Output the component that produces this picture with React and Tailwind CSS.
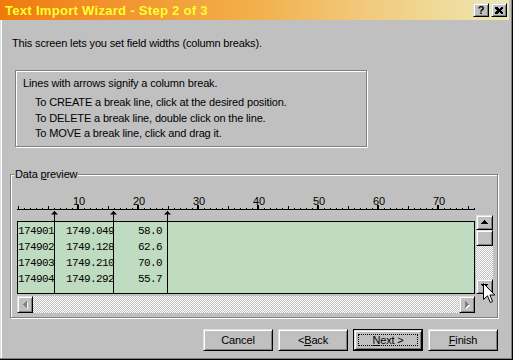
import React from 'react';

// classic 3D borders
const raised =
  'border border-t-[#dfdfdf] border-l-[#dfdfdf] border-r-black border-b-black shadow-[inset_1px_1px_#fff,inset_-1px_-1px_#808080]';
const etched = 'border border-[#808080] shadow-[inset_1px_1px_#fff,1px_1px_#fff]';
const checker =
  'bg-[image:repeating-conic-gradient(#fff_0_25%,#c0c0c0_0_50%)] bg-[length:2px_2px]';

const ROWS = [
  '174901  1749.049    58.0',
  '174902  1749.128    62.6',
  '174903  1749.210    70.0',
  '174904  1749.292    55.7',
];

// break lines, x relative to the ruler / data box
const BREAKS = [37, 96, 150];

function Arrow({ dir, color = '#000', shadow = false }) {
  // 7x4 pixel triangle, rotated per direction
  const rows = [
    [3, 1],
    [2, 3],
    [1, 5],
    [0, 7],
  ];
  const rects = rows.map(([x, w], i) => {
    if (dir === 'up') return <rect key={i} x={x} y={i} width={w} height={1} />;
    if (dir === 'down') return <rect key={i} x={x} y={3 - i} width={w} height={1} />;
    if (dir === 'left') return <rect key={i} x={i} y={x} width={1} height={w} />;
    return <rect key={i} x={3 - i} y={x} width={1} height={w} />;
  });
  const horiz = dir === 'left' || dir === 'right';
  return (
    <svg width={horiz ? 5 : 8} height={horiz ? 8 : 5} shapeRendering="crispEdges">
      {shadow && (
        <g fill="#fff" transform="translate(1,1)">
          {rects}
        </g>
      )}
      <g fill={color}>{rects}</g>
    </svg>
  );
}

function Ruler() {
  const ticks = [];
  for (let p = 0; p <= 76; p++) {
    const x = 6 * p + 1;
    if (p % 10 === 0 && p > 0) ticks.push(<rect key={p} x={x - 1} y={15} width={2} height={5} />);
    else if (p % 5 === 0) ticks.push(<rect key={p} x={x} y={16} width={1} height={4} />);
    else ticks.push(<rect key={p} x={x} y={18} width={1} height={2} />);
  }
  const labels = [10, 20, 30, 40, 50, 60, 70];
  return (
    <svg width="458" height="31" className="block" shapeRendering="crispEdges">
      <g fill="#000">
        <rect x="0" y="19" width="458" height="1" />
        {ticks}
        {BREAKS.map((x) => (
          <g key={x}>
            <rect x={x} y="21" width="1" height="10" />
            <polygon points={`${x - 3},24.5 ${x + 4},24.5 ${x + 0.5},21`} shapeRendering="auto" />
          </g>
        ))}
      </g>
      {labels.map((n) => (
        <text
          key={n}
          x={6 * n + 2}
          y="14.5"
          textAnchor="middle"
          fontSize="11"
          fontFamily="'Liberation Sans', Arial, sans-serif"
          fill="#000"
        >
          {n}
        </text>
      ))}
    </svg>
  );
}

function Button({ children, isDefault = false }) {
  if (isDefault) {
    return (
      <div className="w-[70px] h-[22px] border border-black">
        <div className={`h-full ${raised} flex items-center justify-center p-[3px]`}>
          <div className="w-full h-full border border-dotted border-black flex items-center justify-center">
            {children}
          </div>
        </div>
      </div>
    );
  }
  return (
    <div className={`w-[70px] h-[22px] ${raised} flex items-center justify-center`}>{children}</div>
  );
}

function TitleBar() {
  return (
    <div className="h-[20px] flex items-center justify-between bg-linear-to-r from-[#f07a08] via-[#f2b04a] to-[#ede9b2] pl-[5px] pr-[2px]">
      <span className="text-[13px] font-bold tracking-[0.3px] text-[#ffff30] leading-none">
        Text Import Wizard - Step 2 of 3
      </span>
      <div className="flex gap-[2px]">
        <div className={`w-[16px] h-[14px] bg-[#c0c0c0] ${raised} flex items-center justify-center text-[11px] font-bold leading-none`}>
          ?
        </div>
        <div className={`w-[16px] h-[14px] bg-[#c0c0c0] ${raised} flex items-center justify-center`}>
          <svg width="8" height="7" shapeRendering="crispEdges">
            <path d="M0 0h2l2 2 2-2h2v1l-2 2.5 2 2.5v1h-2l-2-2-2 2h-2v-1l2-2.5-2-2.5z" fill="#000" />
          </svg>
        </div>
      </div>
    </div>
  );
}

export default function App() {
  return (
    <div className="w-[513px] h-[360px] bg-[#c0c0c0] border-r border-b border-black font-['Liberation_Sans',Arial,sans-serif] text-[11px] text-black">
      <div className="h-full flex flex-col border-r border-b border-[#808080] pr-[2px]">
        <TitleBar />
        <div className="flex-1 flex flex-col shadow-[inset_1px_0_#dfdfdf,inset_2px_0_#fff] pl-[10px] pr-[11px] tracking-[-0.15px]">
          <p className="pt-[17px] pl-[2px] leading-[13px]">
            This screen lets you set field widths (column breaks).
          </p>

          <div className={`mt-[20px] ml-[5px] w-[352px] h-[77px] ${etched} pt-[5px] pl-[7px]`}>
            <p className="leading-[15px]">Lines with arrows signify a column break.</p>
            <div className="mt-[4px] pl-[12px] leading-[15.5px]">
              <p>To CREATE a break line, click at the desired position.</p>
              <p>To DELETE a break line, double click on the line.</p>
              <p>To MOVE a break line, click and drag it.</p>
            </div>
          </div>

          <div className={`relative mt-[27px] ${etched} pt-[15px] pl-[6px] pb-[4px]`}>
            <span className="absolute left-[3px] top-[-7px] bg-[#c0c0c0] px-px leading-[13px]">
              Data <span className="underline">p</span>review
            </span>
            <div className="flex">
              <div className="w-[458px] flex flex-col">
                <Ruler />
                <div className="relative h-[73px] border border-black bg-[#c0dcc0] pt-px font-['Liberation_Mono',monospace] text-[11px] tracking-[-0.6px] leading-[16px] whitespace-pre">
                  {ROWS.map((r) => (
                    <div key={r}>{r}</div>
                  ))}
                  {BREAKS.map((x) => (
                    <div
                      key={x}
                      className={`absolute top-0 bottom-0 w-px bg-black ${
                        x === 37 ? 'left-[36px]' : x === 96 ? 'left-[95px]' : 'left-[149px]'
                      }`}
                    />
                  ))}
                </div>
                <div className={`mt-[2px] h-[17px] flex ${checker}`}>
                  <div className={`w-[16px] h-full bg-[#c0c0c0] ${raised} flex items-center justify-center`}>
                    <Arrow dir="left" color="#808080" shadow />
                  </div>
                  <div className="flex-1" />
                  <div className={`w-[16px] h-full bg-[#c0c0c0] ${raised} flex items-center justify-center`}>
                    <Arrow dir="right" color="#808080" shadow />
                  </div>
                </div>
              </div>
              <div className="relative ml-px w-[17px] flex flex-col">
                <div className="h-[25px]" />
                <div className={`h-[79px] flex flex-col ${checker}`}>
                  <div className={`h-[15px] bg-[#c0c0c0] ${raised} flex items-center justify-center`}>
                    <Arrow dir="up" />
                  </div>
                  <div className={`h-[16px] bg-[#c0c0c0] ${raised}`} />
                  <div className="flex-1" />
                  <div className={`h-[15px] bg-[#c0c0c0] ${raised} flex items-center justify-center`}>
                    <Arrow dir="down" />
                  </div>
                </div>
                <div className="h-[19px]" />
                <svg
                  className="absolute left-[7px] top-[93px]"
                  width="13"
                  height="21"
                  viewBox="0 0 13 21"
                >
                  <path
                    d="M0.5 0.5V16.5L4.5 12.8L7.3 19.5L9.6 18.5L6.9 12H11.8Z"
                    fill="#fff"
                    stroke="#000"
                    strokeWidth="1"
                    strokeLinejoin="miter"
                  />
                </svg>
              </div>
            </div>
          </div>

          <div className="mt-[11px] flex justify-end gap-[5px]">
            <Button>Cancel</Button>
            <Button>
              &lt; <span className="underline">B</span>ack
            </Button>
            <Button isDefault>
              <span className="underline">N</span>ext &gt;
            </Button>
            <Button>
              <span className="underline">F</span>inish
            </Button>
          </div>
        </div>
      </div>
    </div>
  );
}
